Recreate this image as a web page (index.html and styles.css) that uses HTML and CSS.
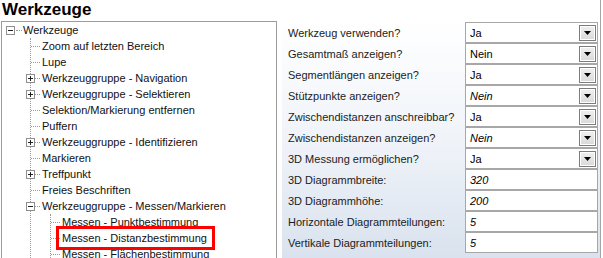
FILE: index.html
```html
<!DOCTYPE html>
<html lang="de">
<head>
  <meta charset="UTF-8" />
  <title>Werkzeuge</title>
  <link rel="stylesheet" href="styles.css">
</head>
<body>

<div class="window">
  <div class="title">Werkzeuge</div>

  <div class="main">
    <!-- tree -->
    <div class="tree">
      <div class="row root">
        <svg class="toggle" width="9" height="9" viewBox="0 0 9 9"><rect x="0.5" y="0.5" width="8" height="8" fill="#fff" stroke="#8e8f8f"/><path d="M2 4.5h5" stroke="#222"/></svg>
        <span class="hline short"></span>
        <span class="label">Werkzeuge</span>
      </div>
      <ul class="children">
        <li class="row"><span class="hline"></span><span class="label">Zoom auf letzten Bereich</span></li>
        <li class="row"><span class="hline"></span><span class="label">Lupe</span></li>
        <li class="row"><svg class="toggle" width="9" height="9" viewBox="0 0 9 9"><rect x="0.5" y="0.5" width="8" height="8" fill="#fff" stroke="#8e8f8f"/><path d="M2 4.5h5M4.5 2v5" stroke="#222"/></svg><span class="hline after-box"></span><span class="label">Werkzeuggruppe - Navigation</span></li>
        <li class="row"><svg class="toggle" width="9" height="9" viewBox="0 0 9 9"><rect x="0.5" y="0.5" width="8" height="8" fill="#fff" stroke="#8e8f8f"/><path d="M2 4.5h5M4.5 2v5" stroke="#222"/></svg><span class="hline after-box"></span><span class="label">Werkzeuggruppe - Selektieren</span></li>
        <li class="row"><span class="hline"></span><span class="label">Selektion/Markierung entfernen</span></li>
        <li class="row"><span class="hline"></span><span class="label">Puffern</span></li>
        <li class="row"><svg class="toggle" width="9" height="9" viewBox="0 0 9 9"><rect x="0.5" y="0.5" width="8" height="8" fill="#fff" stroke="#8e8f8f"/><path d="M2 4.5h5M4.5 2v5" stroke="#222"/></svg><span class="hline after-box"></span><span class="label">Werkzeuggruppe - Identifizieren</span></li>
        <li class="row"><span class="hline"></span><span class="label">Markieren</span></li>
        <li class="row"><svg class="toggle" width="9" height="9" viewBox="0 0 9 9"><rect x="0.5" y="0.5" width="8" height="8" fill="#fff" stroke="#8e8f8f"/><path d="M2 4.5h5M4.5 2v5" stroke="#222"/></svg><span class="hline after-box"></span><span class="label">Treffpunkt</span></li>
        <li class="row"><span class="hline"></span><span class="label">Freies Beschriften</span></li>
        <li>
          <div class="row"><svg class="toggle" width="9" height="9" viewBox="0 0 9 9"><rect x="0.5" y="0.5" width="8" height="8" fill="#fff" stroke="#8e8f8f"/><path d="M2 4.5h5" stroke="#222"/></svg><span class="hline after-box"></span><span class="label">Werkzeuggruppe - Messen/Markieren</span></div>
          <ul class="children">
            <li class="row"><span class="hline"></span><span class="label">Messen - Punktbestimmung</span></li>
            <li class="row"><span class="hline"></span><span class="label marked">Messen - Distanzbestimmung</span></li>
            <li class="row"><span class="hline"></span><span class="label">Messen - Flächenbestimmung</span></li>
          </ul>
        </li>
      </ul>
    </div>

    <!-- property grid -->
    <div class="props">
      <div class="prop"><span class="name">Werkzeug verwenden?</span><span class="value">Ja<span class="drop"><svg width="7" height="4" viewBox="0 0 7 4"><path d="M0 0h7L3.5 4z" fill="#000"/></svg></span></span></div>
      <div class="prop"><span class="name">Gesamtmaß anzeigen?</span><span class="value">Nein<span class="drop"><svg width="7" height="4" viewBox="0 0 7 4"><path d="M0 0h7L3.5 4z" fill="#000"/></svg></span></span></div>
      <div class="prop"><span class="name">Segmentlängen anzeigen?</span><span class="value">Ja<span class="drop"><svg width="7" height="4" viewBox="0 0 7 4"><path d="M0 0h7L3.5 4z" fill="#000"/></svg></span></span></div>
      <div class="prop"><span class="name">Stützpunkte anzeigen?</span><span class="value default">Nein<span class="drop"><svg width="7" height="4" viewBox="0 0 7 4"><path d="M0 0h7L3.5 4z" fill="#000"/></svg></span></span></div>
      <div class="prop"><span class="name">Zwischendistanzen anschreibbar?</span><span class="value">Ja<span class="drop"><svg width="7" height="4" viewBox="0 0 7 4"><path d="M0 0h7L3.5 4z" fill="#000"/></svg></span></span></div>
      <div class="prop"><span class="name">Zwischendistanzen anzeigen?</span><span class="value default">Nein<span class="drop"><svg width="7" height="4" viewBox="0 0 7 4"><path d="M0 0h7L3.5 4z" fill="#000"/></svg></span></span></div>
      <div class="prop"><span class="name">3D Messung ermöglichen?</span><span class="value">Ja<span class="drop"><svg width="7" height="4" viewBox="0 0 7 4"><path d="M0 0h7L3.5 4z" fill="#000"/></svg></span></span></div>
      <div class="prop"><span class="name">3D Diagrammbreite:</span><span class="value default">320</span></div>
      <div class="prop"><span class="name">3D Diagrammhöhe:</span><span class="value default">200</span></div>
      <div class="prop"><span class="name">Horizontale Diagrammteilungen:</span><span class="value default">5</span></div>
      <div class="prop"><span class="name">Vertikale Diagrammteilungen:</span><span class="value default">5</span></div>
    </div>
  </div>
</div>

</body>
</html>
```

FILE: styles.css
```css
* {
  box-sizing: border-box;
}
body {
  margin: 0;
  background: #fff;
  font-family: "Liberation Sans", Arial, sans-serif;
  font-size: 11px;
  color: #111;
}
.window {
  width: 601px;
  height: 258px;
  border-right: 1px solid #a5a5a5;
  overflow: hidden;
}
.title {
  height: 21px;
  padding-left: 2px;
  font-size: 17px;
  font-weight: bold;
  line-height: 20px;
  color: #000;
}
.main {
  display: flex;
  gap: 5px;
  height: 237px;
  padding-left: 1px;
}

/* tree */
.tree {
  width: 276px;
  border: 1px solid #9c9c9c;
  border-bottom: none;
  overflow: hidden;
}
.tree ul {
  list-style: none;
  margin: 0;
  padding: 0;
}
.row {
  display: flex;
  align-items: center;
  height: 16px;
  white-space: nowrap;
}
.root {
  padding-left: 4px;
}
.tree .children {
  margin-left: 28px;
  border-left: 1px dotted #9a9a9a;
}
.tree .children .children {
  margin-left: 19px;
}
.toggle {
  flex: none;
  margin-left: -5px;
}
.root .toggle {
  margin-left: 0;
}
.hline {
  width: 9px;
  border-top: 1px dotted #9a9a9a;
  margin-right: 2px;
}
.hline.short {
  width: 6px;
  margin-left: 1px;
  margin-right: 1px;
}
.hline.after-box {
  width: 5px;
  margin-left: 0;
  margin-right: 2px;
}
.label {
  line-height: 16px;
}
.marked {
  outline: 3px solid #f00;
  padding: 1px 5px 1px 3px;
  margin-left: -3px;
}

/* property grid */
.props {
  width: 318px;
  padding-top: 1px;
  background: linear-gradient(to bottom, #ffffff 0%, #eef2f8 55%, #d9e2ee 100%);
}
.prop {
  display: flex;
  height: 21px;
  align-items: stretch;
}
.name {
  width: 183px;
  padding-left: 6px;
  display: flex;
  align-items: center;
  color: #1b1b1b;
}
.value {
  width: 133px;
  display: flex;
  align-items: center;
  justify-content: space-between;
  padding-left: 4px;
  padding-right: 1px;
  background: #fff;
  border: 1px solid #a7a7a7;
  color: #000;
}
.value.default {
  font-style: italic;
}
.drop {
  width: 17px;
  height: 16px;
  display: flex;
  align-items: center;
  justify-content: center;
  border: 1px solid #7c7c7c;
  box-shadow: inset 0 0 0 1px #fff;
  background: linear-gradient(to bottom, #f0f0f0, #d9d9d9);
  font-style: normal;
}
```
